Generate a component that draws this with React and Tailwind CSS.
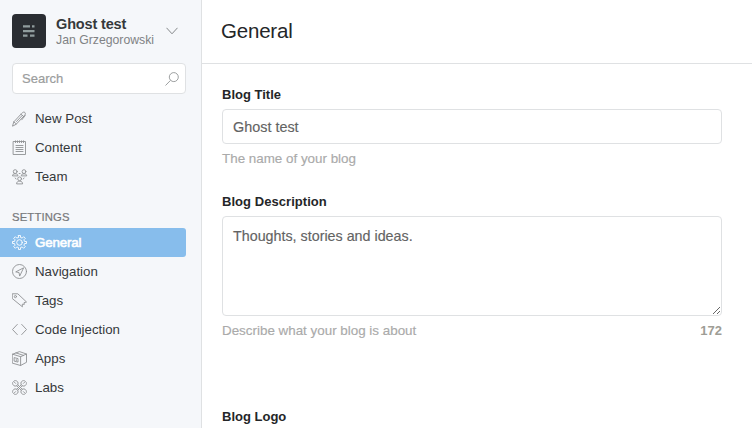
import React from 'react';

function Icon({ children }) {
  return (
    <svg
      className="size-4 shrink-0"
      viewBox="0 0 16 16"
      fill="none"
      stroke="currentColor"
      strokeWidth="0.9"
      strokeLinecap="round"
      strokeLinejoin="round"
    >
      {children}
    </svg>
  );
}

const PenIcon = () => (
  <Icon>
    <path d="M.6 14.8l1.2-3.9L9.6 2.500c1.200-1.300 2.400-1.900 3.300-1s.5 2.100-.8 3.400L4.400 13z" />
    <path d="M9 3.200l2.800 2.500M1.800 10.900L4.400 13M13.200 4.500L9.800 8.800M10.200 4.500L4.500 10.500" />
  </Icon>
);

const ContentIcon = () => (
  <Icon>
    <path d="M1.500 1.500h12v13h-12zM3.500.8v1.800M5.500.8v1.800M7.500.8v1.800M9.500.8v1.800M11.500.8v1.800" />
    <path d="M4 5.500h7M4 7.500h7M4 9.500h7M4 11.500h7" />
  </Icon>
);

const TeamIcon = () => (
  <Icon>
    <circle cx="3.2" cy="2.6" r="1.9" />
    <circle cx="12" cy="2.6" r="1.9" />
    <circle cx="7.6" cy="9.8" r="1.9" />
    <path d="M.5 6.500c0-1.100.9-1.700 2.700-1.700s2.700.6 2.700 1.700zM9.300 6.500c0-1.100.9-1.700 2.700-1.700s2.700.6 2.700 1.700zM4.600 14.500c0-1.500 1.100-2.300 3-2.300s3 .8 3 2.300zM7.200 4.500h.9M3.300 9l.7 1M12 9l-.7 1" />
  </Icon>
);

const GearIcon = () => (
  <Icon>
    <circle cx="7.5" cy="7.5" r="2.8" />
    <path d="M6.500.5h2v1.900l1.700.7 1.400-1.400 1.700 1.700-1.400 1.400.7 1.700h1.900v2h-1.900l-.7 1.700 1.400 1.400-1.700 1.700-1.400-1.400-1.700.7v1.900h-2v-1.900l-1.700-.7-1.400 1.400-1.700-1.700 1.400-1.400-.7-1.700H.5v-2h1.900l.7-1.700-1.400-1.400 1.700-1.700 1.400 1.400 1.700-.7z" />
  </Icon>
);

const CompassIcon = () => (
  <Icon>
    <circle cx="7.5" cy="7.5" r="7" />
    <path d="M11.300 4L3.700 7.900l3.300.6.6 3.200z" />
  </Icon>
);

const TagIcon = () => (
  <Icon>
    <path d="M.6.8h5.200l8.700 8.200-2.500.7.300 1.700-2-.2.100 2.600L.6 5.800z" />
    <circle cx="3.4" cy="3.6" r="1.1" />
  </Icon>
);

const CodeIcon = () => (
  <Icon>
    <path d="M5.300 2.400L.5 7.500l4.800 5.100M9.700 2.400l4.800 5.100-4.800 5.100" />
  </Icon>
);

const BoxIcon = () => (
  <Icon>
    <path d="M.6 3.200L7.500.6l7 2.400v8.300l-5.900 3.200-8-2.300zM.6 3.200l8 2.500 5.900-2.700M8.600 5.700v8.800M4 1.900l7.500 2.500" />
    <path d="M2.500 6.700l3.500.9v3.500l-3.500-.9zM4.300 8.600v1" />
  </Icon>
);

const ToolsIcon = () => (
  <Icon>
    <path d="M1.500 1.300L3.600 3.400M13.500 1.300l-2.100 2.100M1.500 13.700l2.100-2.100M13.500 13.700l-2.100-2.100" />
    <path d="M2.600.6a2.800 2.800 0 1 1-2 2M12.400.6a2.800 2.800 0 1 0 2 2M2.600 14.400a2.800 2.800 0 1 0-2-2M12.400 14.400a2.800 2.800 0 1 1 2-2" />
    <path d="M4.800 5.800l4.500 4.500M5.800 4.800l4.500 4.500M10.200 5.800L8.800 7.200M9.200 4.800L7.800 6.200M4.800 9.200l1.400-1.400M5.800 10.200l1.400-1.400" />
  </Icon>
);

function NavItem({ icon: Glyph, label, active }) {
  return (
    <a
      className={
        active
          ? 'flex h-[29px] w-[186px] items-center gap-[7px] rounded-r-[3px] bg-[#87bdec] pl-3 text-white'
          : 'flex h-[29px] w-[186px] items-center gap-[7px] pl-3 text-[#8f9193]'
      }
    >
      <Glyph />
      <span
        className={
          active
            ? 'text-[13.3px] tracking-[-0.15px] [-webkit-text-stroke:0.6px_white]'
            : 'text-[13.3px] text-[#35393b]'
        }
      >
        {label}
      </span>
    </a>
  );
}

function Sidebar() {
  return (
    <aside className="h-[428px] w-[202px] shrink-0 border-r border-[#dfe1e3] bg-[#f5f7fa]">
      <header className="flex h-[63px] pl-3 pt-3.5">
        <div className="flex size-[34px] items-center justify-center rounded-[4px] bg-[#2a2d32]">
          <svg className="h-3 w-3" viewBox="0 0 12 12" fill="#909c9d">
            <path d="M0 .3h7v2.200H0zM9 .3h2.500v2.200H9zM0 5h11.500v2.200H0zM0 9.500h4.500v2.200H0zM7 9.500h4.500v2.200H7z" />
          </svg>
        </div>
        <div className="ml-2.5 w-[100px] whitespace-nowrap pt-px">
          <div className="text-[14.5px] leading-[18px] font-bold tracking-[-0.15px] text-[#35393b]">Ghost test</div>
          <div className="text-[12.25px] leading-[15px] text-[#808284]">Jan Grzegorowski</div>
        </div>
        <svg className="ml-2.5 mt-[13px] h-2 w-3" viewBox="0 0 12 8" fill="none" stroke="#85888a">
          <path d="M.5.8L6 6.8 11.5.8" />
        </svg>
      </header>
      <div className="ml-3 flex h-[31px] w-[174px] items-center justify-between rounded-[4px] border border-[#dfe1e3] bg-white pl-[9px] pr-[6px]">
        <span className="text-[13px] text-[#9b9d9d] [-webkit-text-stroke:0.2px_#9b9d9d]">Search</span>
        <svg className="size-[14px]" viewBox="0 0 14 14" fill="none" stroke="#929596" strokeWidth="0.9">
          <circle cx="8.8" cy="5.1" r="4.5" />
          <path d="M5.5 8.4L.5 13.5" />
        </svg>
      </div>
      <nav className="pt-2.5">
        <NavItem icon={PenIcon} label="New Post" />
        <NavItem icon={ContentIcon} label="Content" />
        <NavItem icon={TeamIcon} label="Team" />
      </nav>
      <h2 className="mt-4 h-[21px] pl-3 text-[11.3px] leading-5 tracking-[0.15px] text-[#77797b] [-webkit-text-stroke:0.2px_#77797b]">
        SETTINGS
      </h2>
      <nav>
        <NavItem icon={GearIcon} label="General" active />
        <NavItem icon={CompassIcon} label="Navigation" />
        <NavItem icon={TagIcon} label="Tags" />
        <NavItem icon={CodeIcon} label="Code Injection" />
        <NavItem icon={BoxIcon} label="Apps" />
        <NavItem icon={ToolsIcon} label="Labs" />
      </nav>
    </aside>
  );
}

function Main() {
  return (
    <main className="min-w-0 flex-1">
      <header className="h-16 border-b border-[#dfe1e3] pl-[19px] pt-[19px]">
        <h1 className="text-[20.5px] leading-6 tracking-[-0.2px] text-[#242628]">General</h1>
      </header>
      <form className="w-[520px] pl-5 text-[13px] text-[#242628]">
        <label className="block pt-[21px] leading-5 font-bold">Blog Title</label>
        <input
          className="mt-1 block h-[35px] w-full rounded-[4px] border border-[#dfe1e3] bg-white px-2.5 text-[14.4px] text-[#636363] outline-none [-webkit-text-stroke:0.15px_#636363]"
          defaultValue="Ghost test"
        />
        <p className="mt-[5px] text-[13.4px] leading-5 text-[#aaaaaa] [-webkit-text-stroke:0.15px_#aaaaaa]">The name of your blog</p>
        <label className="mt-[23px] block leading-5 font-bold tracking-[0.05px]">Blog Description</label>
        <textarea
          className="mt-1 block h-[100px] w-full resize rounded-[4px] border border-[#dfe1e3] bg-white px-2.5 py-[9px] text-[14.3px] leading-[21px] text-[#636363] outline-none [-webkit-text-stroke:0.15px_#636363]"
          defaultValue="Thoughts, stories and ideas."
        />
        <div className="mt-[5px] flex justify-between leading-5">
          <p className="text-[13.4px] text-[#aaaaaa] [-webkit-text-stroke:0.15px_#aaaaaa]">Describe what your blog is about</p>
          <span className="font-bold text-[#9e9d95]">172</span>
        </div>
        <label className="mt-[66px] block leading-5 font-bold">Blog Logo</label>
      </form>
    </main>
  );
}

export default function App() {
  return (
    <div className="flex h-[428px] w-[752px] overflow-hidden bg-white font-['Liberation_Sans',Arial,sans-serif]">
      <Sidebar />
      <Main />
    </div>
  );
}
